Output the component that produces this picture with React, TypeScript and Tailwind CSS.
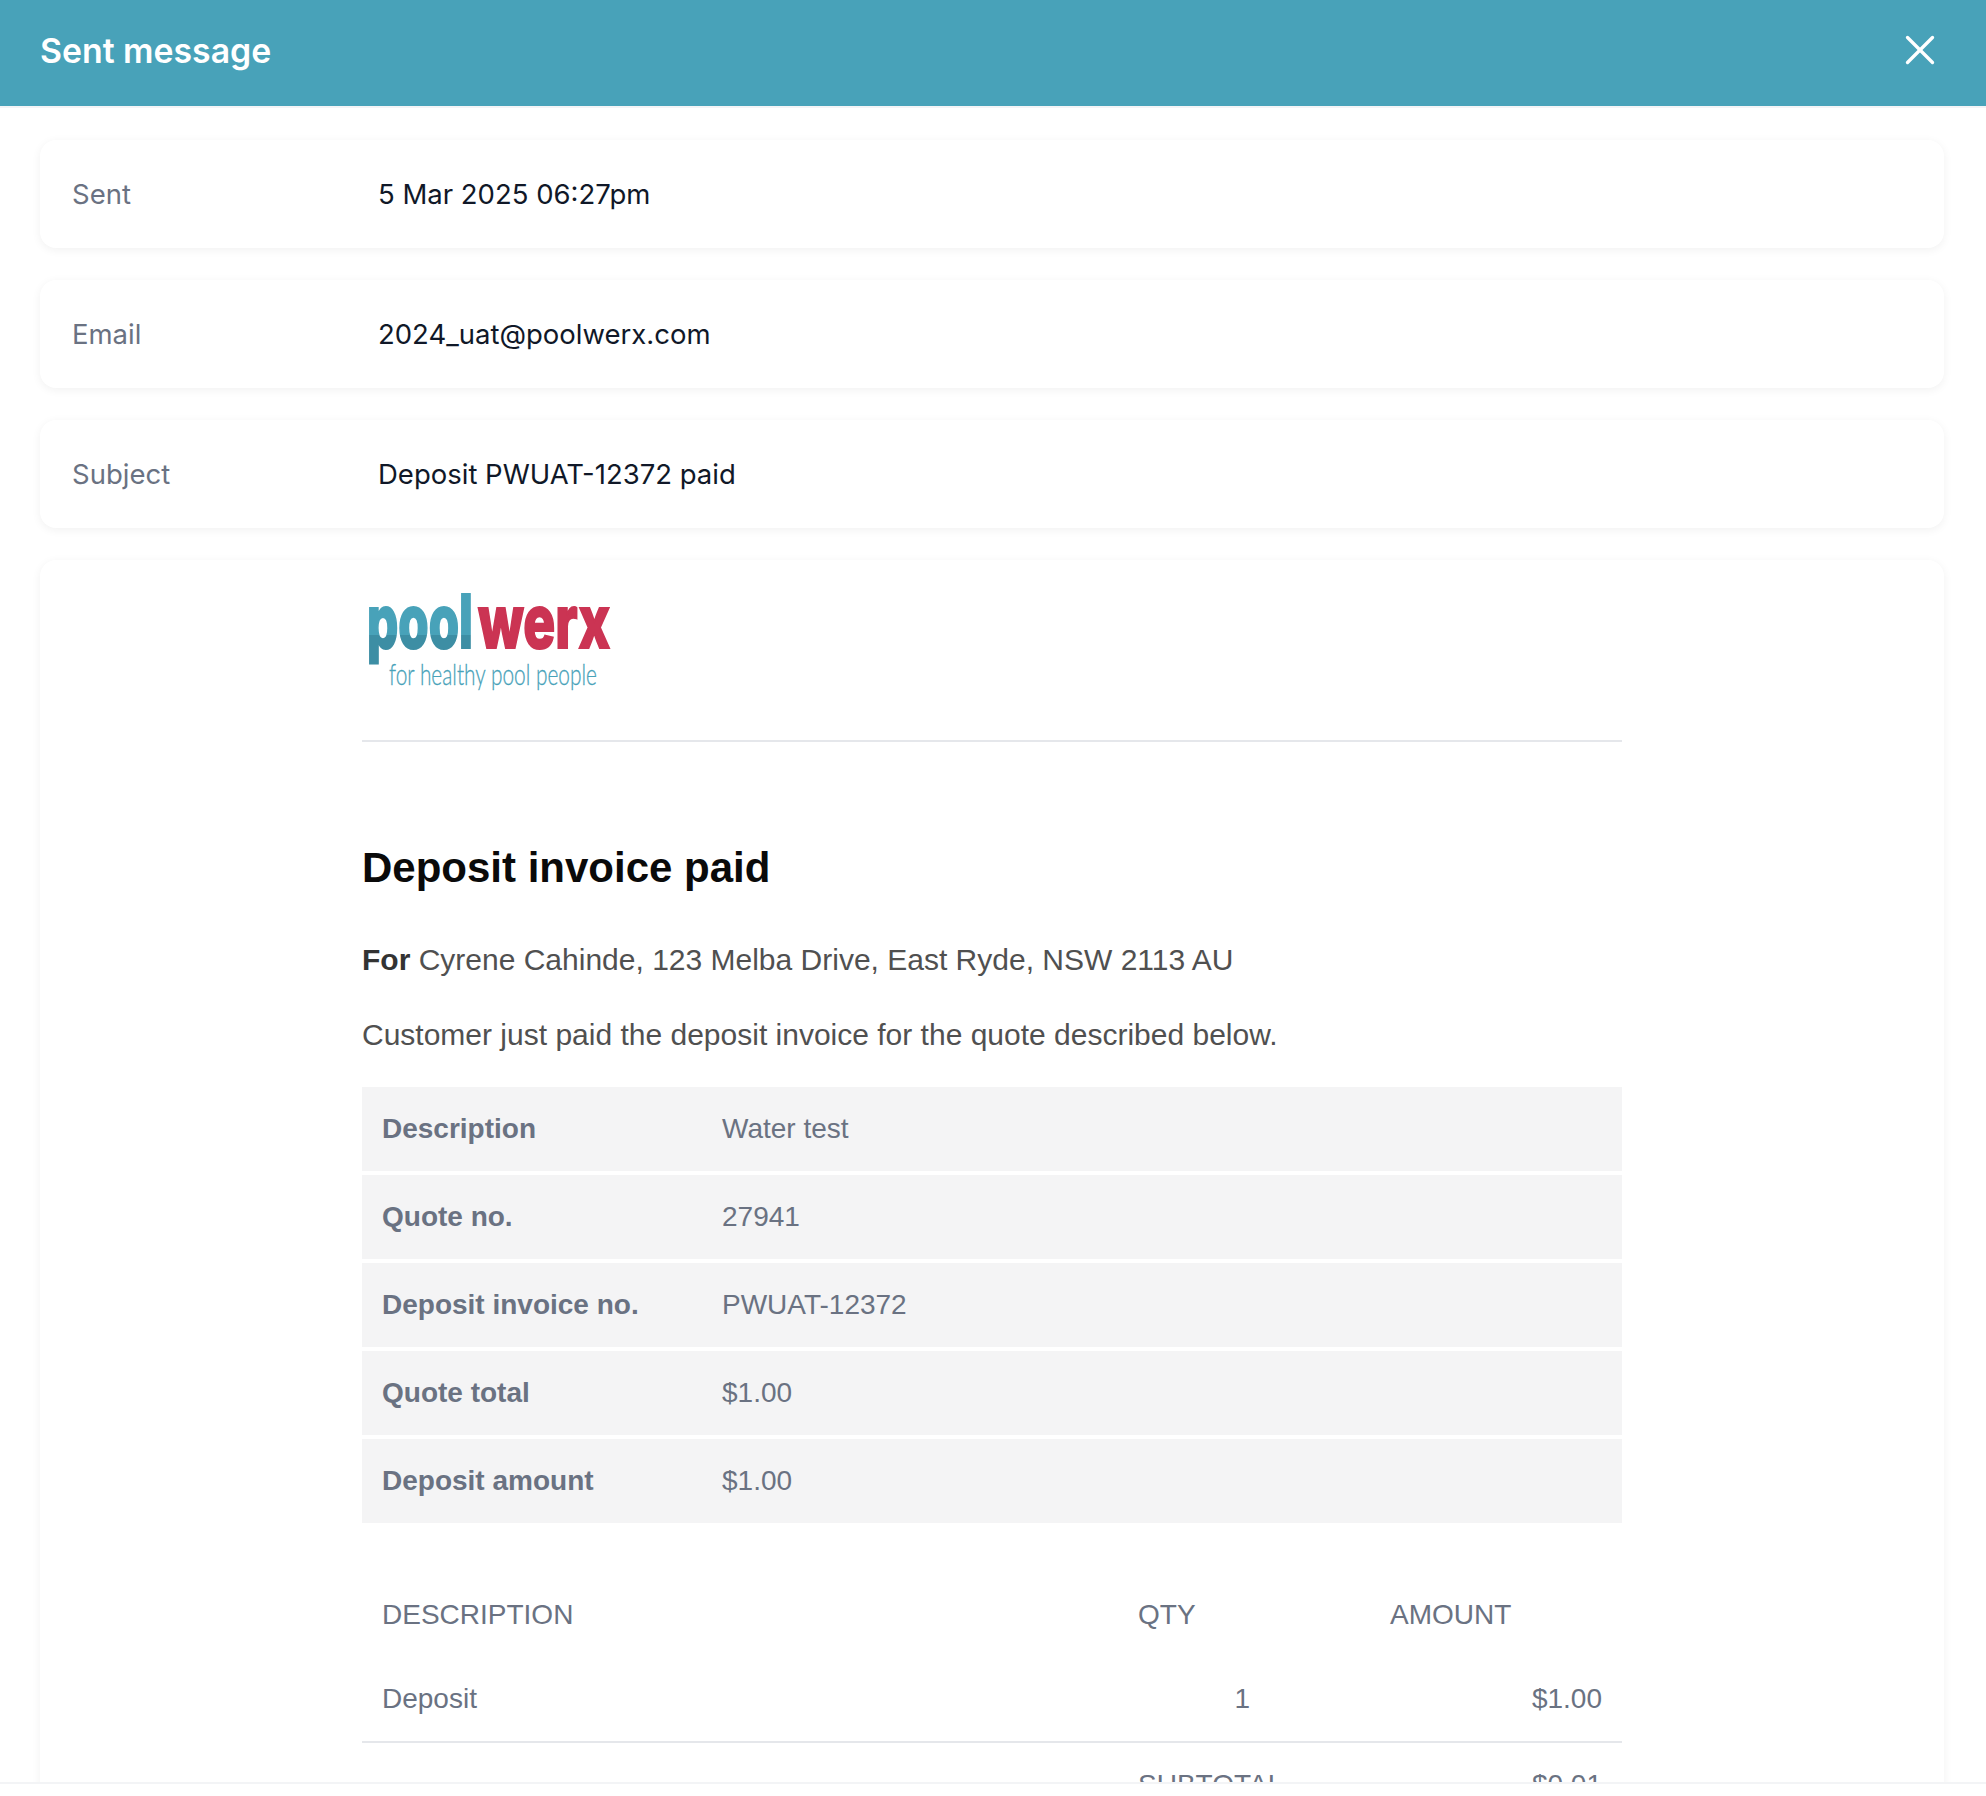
import { X } from "lucide-react";

const metaRows = [
  { label: "Sent", value: "5 Mar 2025 06:27pm" },
  { label: "Email", value: "2024_uat@poolwerx.com" },
  { label: "Subject", value: "Deposit PWUAT-12372 paid" },
];

const summaryRows = [
  { label: "Description", value: "Water test" },
  { label: "Quote no.", value: "27941" },
  { label: "Deposit invoice no.", value: "PWUAT-12372" },
  { label: "Quote total", value: "$1.00" },
  { label: "Deposit amount", value: "$1.00" },
];

function Logo() {
  return (
    <svg width="260" height="110" viewBox="0 0 260 110" className="block overflow-visible" aria-label="poolwerx">
      <defs>
        <linearGradient id="teal" gradientUnits="userSpaceOnUse" x1="0" y1="0" x2="0" y2="80">
          <stop offset="0.54" stopColor="#48a2b9" />
          <stop offset="0.54" stopColor="#3d8ea4" />
        </linearGradient>
      </defs>
      <text
        x="5"
        y="56"
        fontFamily="Inter, sans-serif"
        fontWeight="800"
        fontSize="74"
        textLength="106"
        lengthAdjust="spacingAndGlyphs"
        fill="url(#teal)"
        stroke="url(#teal)"
        strokeWidth="2"
      >
        pool
      </text>
      <text
        x="116"
        y="56"
        fontFamily="Inter, sans-serif"
        fontWeight="800"
        fontSize="74"
        textLength="132"
        lengthAdjust="spacingAndGlyphs"
        fill="#cb3453"
        stroke="#cb3453"
        strokeWidth="2"
      >
        werx
      </text>
      <text
        x="27"
        y="93"
        fontFamily="Lato, sans-serif"
        fontWeight="300"
        fontSize="30"
        textLength="208"
        lengthAdjust="spacingAndGlyphs"
        fill="#48a2b9"
        stroke="#48a2b9"
        strokeWidth="0.3"
      >
        for healthy pool people
      </text>
    </svg>
  );
}

export default function App() {
  return (
    <div className="h-[1796px] w-[1986px] overflow-hidden bg-white font-['Inter',sans-serif]">
      <div className="h-[1784px] overflow-hidden border-b-2 border-gray-100">
        <header className="flex h-[108px] items-center justify-between border-b-2 border-gray-100 bg-[#48a2b9] pb-1 pl-10 pr-[41px]">
          <h2 className="text-[33.8px] font-semibold leading-none text-white">Sent message</h2>
          <X className="-mt-[2px] h-[50px] w-[50px] text-white" strokeWidth={1.6} />
        </header>

        <main className="flex flex-col gap-8 pl-10 pr-[42px] pt-8">
          {metaRows.map((row) => (
            <div
              key={row.label}
              className="flex h-[108px] items-center rounded-2xl bg-white pl-8 pt-0.5 text-[27.5px] shadow-[0_2px_10px_rgba(0,0,0,0.06)]"
            >
              <span className="w-[306px] text-gray-500">{row.label}</span>
              <span className="text-gray-900">{row.value}</span>
            </div>
          ))}

          <section className="rounded-2xl bg-white pl-[322px] pr-[322px] pt-8 font-['Liberation_Sans',sans-serif] shadow-[0_2px_10px_rgba(0,0,0,0.06)]">
            <div className="h-[150px] border-b-2 border-gray-200">
              <Logo />
            </div>

            <h1 className="mt-[96px] text-[42px] font-bold leading-[60px] text-[#0a0a0a]">Deposit invoice paid</h1>
            <p className="mt-[39px] text-[30px] leading-[46px] text-[#505050]">
              <strong className="font-bold text-[#333333]">For</strong> Cyrene Cahinde, 123 Melba Drive, East Ryde, NSW 2113 AU
            </p>
            <p className="mt-[29px] text-[30px] leading-[46px] text-[#505050]">
              Customer just paid the deposit invoice for the quote described below.
            </p>

            <div className="mt-[29px] flex flex-col gap-1">
              {summaryRows.map((row) => (
                <div key={row.label} className="flex h-[84px] items-center bg-[#f4f4f5] pl-5 text-[28px] text-gray-500">
                  <span className="w-[340px] font-bold">{row.label}</span>
                  <span>{row.value}</span>
                </div>
              ))}
            </div>

            <div className="mt-[50px] grid grid-cols-[756px_252px_252px] text-[28px] text-gray-500">
              <div className="flex h-[84px] items-center pl-5">DESCRIPTION</div>
              <div className="flex h-[84px] items-center pl-5">QTY</div>
              <div className="flex h-[84px] items-center pl-5">AMOUNT</div>
              <div className="flex h-[86px] items-center border-b-2 border-gray-200 pl-5">Deposit</div>
              <div className="flex h-[86px] items-center justify-end border-b-2 border-gray-200 pr-[120px]">1</div>
              <div className="flex h-[86px] items-center justify-end border-b-2 border-gray-200 pr-5">$1.00</div>
              <div className="h-[84px]" />
              <div className="flex h-[84px] items-center pl-5">SUBTOTAL</div>
              <div className="flex h-[84px] items-center justify-end pr-5">$0.01</div>
            </div>
          </section>
        </main>
      </div>
    </div>
  );
}
